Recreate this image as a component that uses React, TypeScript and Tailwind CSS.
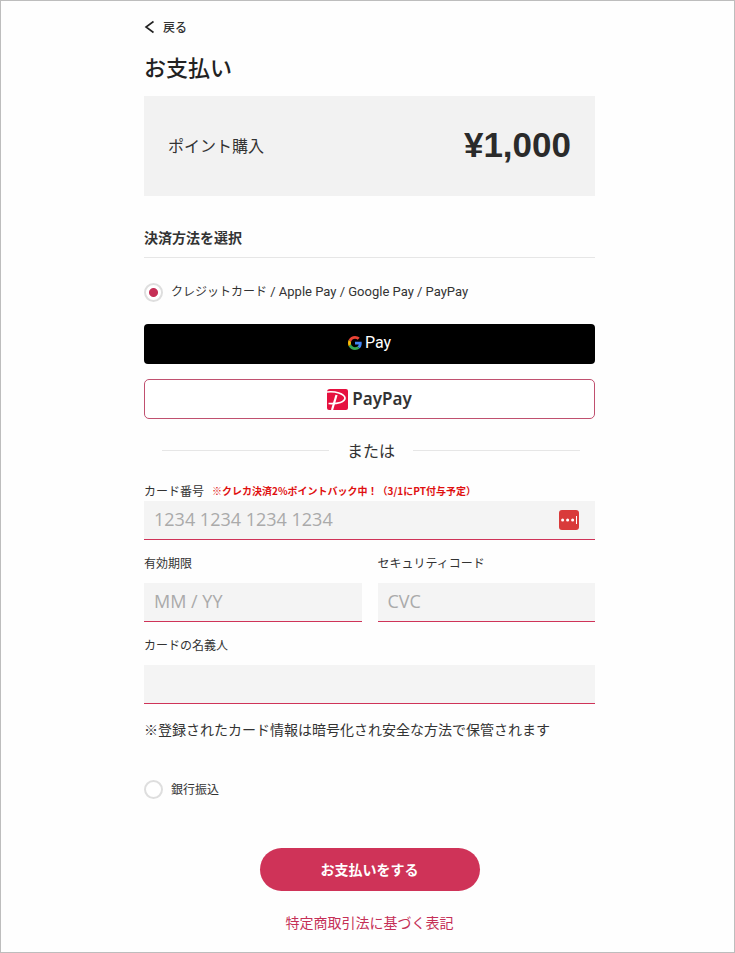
import { useState } from "react";
import type { InputHTMLAttributes, ReactNode } from "react";
import { clsx } from "clsx";

type Method = "card" | "bank";

const GoogleIcon = () => (
  <svg viewBox="0 0 48 48" className="h-[14px] w-[14px]" aria-hidden="true">
    <path
      fill="#4285F4"
      d="M46.98 24.55c0-1.57-.15-3.09-.38-4.55H24v9.02h12.94c-.58 2.96-2.26 5.48-4.78 7.18l7.73 6c4.51-4.18 7.09-10.36 7.09-17.65z"
    />
    <path
      fill="#34A853"
      d="M24 48c6.48 0 11.93-2.13 15.89-5.81l-7.73-6c-2.15 1.45-4.92 2.3-8.16 2.3-6.26 0-11.57-4.22-13.47-9.91l-7.98 6.19C6.51 42.62 14.62 48 24 48z"
    />
    <path
      fill="#FBBC05"
      d="M10.53 28.59c-.48-1.45-.76-2.99-.76-4.59s.27-3.14.76-4.59l-7.98-6.19C.92 16.46 0 20.12 0 24c0 3.88.92 7.54 2.56 10.78l7.97-6.19z"
    />
    <path
      fill="#EA4335"
      d="M24 9.5c3.54 0 6.71 1.22 9.21 3.6l6.85-6.85C35.9 2.38 30.47 0 24 0 14.62 0 6.51 5.38 2.56 13.22l7.98 6.19C12.43 13.72 17.74 9.5 24 9.5z"
    />
  </svg>
);

const PayPayIcon = () => (
  <svg viewBox="0 0 42 42" className="h-[21px] w-[21px]" aria-hidden="true">
    <path
      fill="#e6103f"
      d="M6 0H38Q42 0 42 4V38Q42 42 38 42H4Q0 42 0 38V6Q0 0 6 0Z"
    />
    <path
      fill="none"
      stroke="#fff"
      strokeWidth="3.4"
      d="M0 6C16 4 35 9 36 18C36 26 22 30 3 29"
    />
    <path fill="none" stroke="#fff" strokeWidth="4.4" d="M19 12L10 42" />
  </svg>
);

const PasswordManagerIcon = () => (
  <svg viewBox="0 0 20 20" className="h-5 w-5" aria-hidden="true">
    <rect width="20" height="20" rx="3" fill="#d93a3a" />
    <circle cx="3.6" cy="10" r="1.5" fill="#fff" />
    <circle cx="8.6" cy="10" r="1.5" fill="#fff" />
    <circle cx="13.6" cy="10" r="1.5" fill="#fff" />
    <path d="M17.5 6v8" stroke="#fff" strokeWidth="1" />
  </svg>
);

interface MethodRadioProps {
  value: Method;
  selected: Method;
  onSelect: (value: Method) => void;
  children: ReactNode;
}

const MethodRadio = ({ value, selected, onSelect, children }: MethodRadioProps) => (
  <label className="flex h-5 cursor-pointer items-center gap-2 text-xs">
    <input
      type="radio"
      name="method"
      value={value}
      checked={selected === value}
      onChange={() => onSelect(value)}
      className="h-[19px] w-[19px] shrink-0 appearance-none rounded-full border-2 border-[#dedede] bg-white checked:bg-[radial-gradient(circle,#c52f56_4px,#fff_5px)]"
    />
    <span>{children}</span>
  </label>
);

interface FieldProps extends InputHTMLAttributes<HTMLInputElement> {
  id: string;
  label: string;
  note?: string;
  tight?: boolean;
  icon?: ReactNode;
}

const Field = ({ id, label, note, tight, icon, ...props }: FieldProps) => (
  <div className="flex min-w-0 flex-col">
    <label htmlFor={id} className={clsx("flex h-5 items-center gap-2 text-xs", !tight && "mb-[10px]")}>
      {label}
      {note && <span className="text-[10px] font-bold whitespace-nowrap text-[#e01010]">{note}</span>}
    </label>
    <div className="flex h-[39px] items-center border-b border-[#cf3358] bg-[#f4f4f4] pr-4 pl-[10px]">
      <input
        id={id}
        className="h-full min-w-0 flex-1 bg-transparent pb-[2px] font-['Open_Sans','Noto_Sans_CJK_JP',sans-serif] text-lg outline-none placeholder:text-[#aaa]"
        {...props}
      />
      {icon}
    </div>
  </div>
);

export default function App() {
  const [method, setMethod] = useState<Method>("card");

  return (
    <div className="min-h-screen border border-[#bdbdbd] bg-[#fefefe] pl-1 font-['Noto_Sans_CJK_JP',sans-serif] text-[#333]">
      <main className="mx-auto w-full max-w-[451px] pt-4 pb-4">
        <a href="#back" className="flex h-5 w-fit items-center gap-2 text-xs font-medium">
          <svg viewBox="0 0 11 14" className="h-[14px] w-[11px]" aria-hidden="true">
            <path d="M9.5 1.5L2 7l7.5 5.5" fill="none" stroke="#222" strokeWidth="1.6" />
          </svg>
          戻る
        </a>
        <h1 className="mt-[13px] text-[22px] leading-8 font-medium text-[#222]">お支払い</h1>

        <section className="mt-[14px] flex h-[100px] items-center justify-between bg-[#f2f2f2] px-6 pb-[2px]">
          <p className="text-base">ポイント購入</p>
          <p className="font-['Liberation_Sans',sans-serif] text-[35px] leading-10 font-bold text-[#2b2b2b]">¥1,000</p>
        </section>

        <form onSubmit={(e) => e.preventDefault()}>
          <h2 className="mt-[31px] border-b border-[#e6e6e6] pb-[10px] text-sm leading-5 font-bold">決済方法を選択</h2>

          <div className="mt-6">
            <MethodRadio value="card" selected={method} onSelect={setMethod}>
              クレジットカード
              <span className="font-[Roboto,sans-serif] text-[13px]"> / Apple Pay / Google Pay / PayPay</span>
            </MethodRadio>
          </div>

          <button
            type="button"
            className="mt-[22px] flex h-10 w-full items-center justify-center gap-[3px] rounded bg-black pb-[2px] font-[Roboto,sans-serif] text-base text-white"
          >
            <GoogleIcon />
            Pay
          </button>
          <button
            type="button"
            className="mt-[15px] flex h-10 w-full items-center justify-center gap-1 rounded-[5px] border border-[#c0506f] bg-white font-['Noto_Sans',sans-serif] text-[17px] font-semibold"
          >
            <PayPayIcon />
            PayPay
          </button>

          <div className="mt-[19px] flex h-6 items-center gap-[18px] pr-[15px] pl-[18px]">
            <span className="h-px flex-1 bg-[#e6e6e6]" />
            <span className="text-base">または</span>
            <span className="h-px flex-1 bg-[#e6e6e6]" />
          </div>

          <div className="mt-[19px] flex flex-col gap-[13px]">
            <Field
              id="number"
              label="カード番号"
              note="※クレカ決済2%ポイントバック中！（3/1にPT付与予定）"
              tight
              placeholder="1234 1234 1234 1234"
              inputMode="numeric"
              icon={<PasswordManagerIcon />}
            />
            <div className="grid grid-cols-2 gap-4">
              <Field id="expiry" label="有効期限" placeholder="MM / YY" />
              <Field id="cvc" label="セキュリティコード" placeholder="CVC" />
            </div>
            <Field id="holder" label="カードの名義人" />
          </div>

          <p className="mt-[15px] text-sm leading-5">※登録されたカード情報は暗号化され安全な方法で保管されます</p>

          <div className="mt-10">
            <MethodRadio value="bank" selected={method} onSelect={setMethod}>
              銀行振込
            </MethodRadio>
          </div>

          <button
            type="submit"
            className="mx-auto mt-[49px] block h-[43px] w-[220px] rounded-full bg-[#cf3358] pb-[2px] text-sm font-bold text-white"
          >
            お支払いをする
          </button>
        </form>

        <a href="#law" className="mx-auto mt-[21px] block w-fit text-sm leading-5 text-[#c52f56]">
          特定商取引法に基づく表記
        </a>
      </main>
    </div>
  );
}
